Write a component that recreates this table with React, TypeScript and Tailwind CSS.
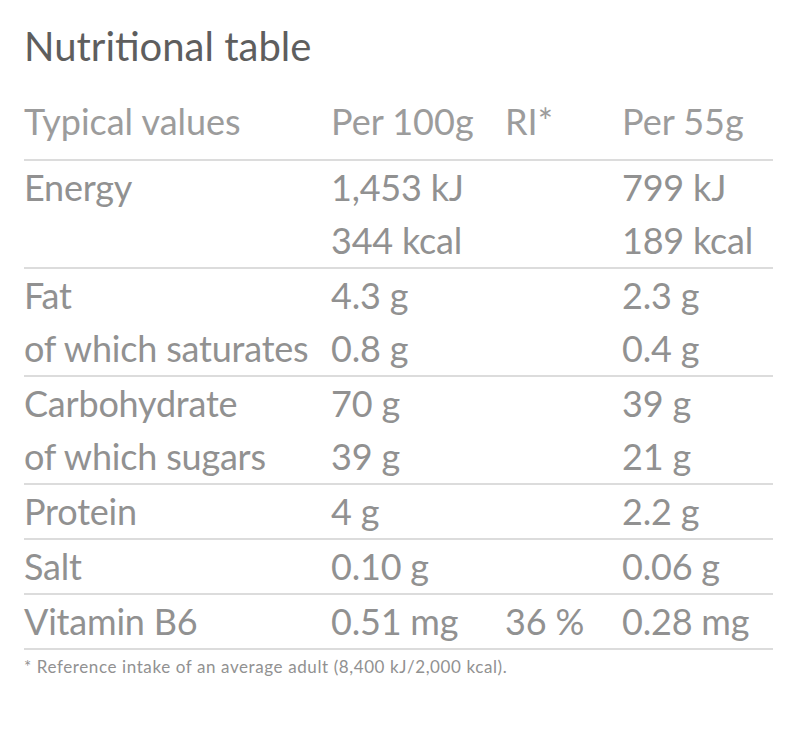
const rows: { label: string[]; per100: string[]; ri: string; per55: string[] }[] = [
  { label: ['Energy', ''], per100: ['1,453 kJ', '344 kcal'], ri: '', per55: ['799 kJ', '189 kcal'] },
  { label: ['Fat', 'of which saturates'], per100: ['4.3 g', '0.8 g'], ri: '', per55: ['2.3 g', '0.4 g'] },
  { label: ['Carbohydrate', 'of which sugars'], per100: ['70 g', '39 g'], ri: '', per55: ['39 g', '21 g'] },
  { label: ['Protein'], per100: ['4 g'], ri: '', per55: ['2.2 g'] },
  { label: ['Salt'], per100: ['0.10 g'], ri: '', per55: ['0.06 g'] },
  { label: ['Vitamin B6'], per100: ['0.51 mg'], ri: '36 %', per55: ['0.28 mg'] },
]

function Cell({ lines }: { lines: string[] }) {
  return (
    <div className="flex flex-col">
      {lines.map((l, i) => (
        <div key={i} className="h-[53px] leading-[53px] whitespace-nowrap">
          {l}
        </div>
      ))}
    </div>
  )
}

export default function App() {
  return (
    <div className="min-h-screen bg-white font-['Lato',sans-serif] pl-[24px] pt-[22px] w-[800px]">
      <h1 className="text-[40px] leading-[48px] text-[#5e5e5e]">Nutritional table</h1>

      <div className="w-[749px] mt-[23px]">
        <div className="grid grid-cols-[307px_174px_117px_1fr] text-[36px] text-[#9c9c9c] h-[66px] leading-[54px] pt-[1px]">
          <div>Typical values</div>
          <div>Per 100g</div>
          <div>RI*</div>
          <div>Per 55g</div>
        </div>

        {rows.map((r, i) => (
          <div
            key={i}
            className="grid grid-cols-[307px_174px_117px_1fr] border-t-2 border-[#dcdcdc] text-[36px] tracking-[-0.2px] text-[#919191]"
          >
            <Cell lines={r.label} />
            <Cell lines={r.per100} />
            <Cell lines={[r.ri]} />
            <Cell lines={r.per55} />
          </div>
        ))}
        <div className="border-t-2 border-[#dcdcdc]" />
      </div>

      <p className="mt-[5px] text-[17px] leading-[24px] tracking-[0.6px] text-[#919191]">
        * Reference intake of an average adult (8,400 kJ/2,000 kcal).
      </p>
    </div>
  )
}
